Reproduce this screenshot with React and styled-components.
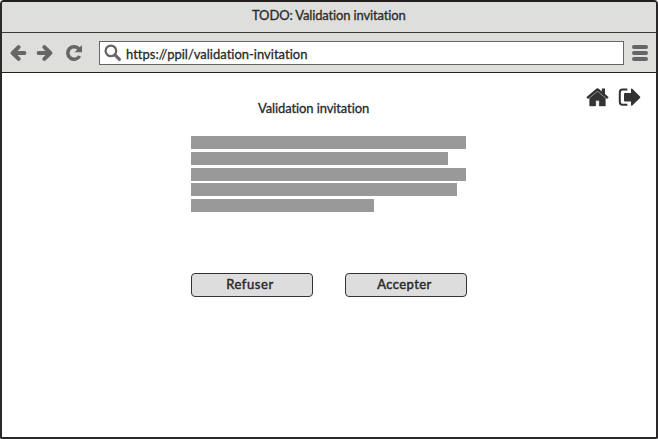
import React from "react";
import styled, { createGlobalStyle } from "styled-components";

const GlobalStyle = createGlobalStyle`
  *, *::before, *::after { box-sizing: border-box; }
  html, body { margin: 0; background: #fff; overflow: hidden; }
  svg { display: block; flex: none; }
`;

const Browser = styled.div`
  width: 658px;
  height: 439px;
  display: flex;
  flex-direction: column;
  border: 2px solid #2b2829;
  border-top-color: #231f20;
  border-radius: 4px 4px 2px 2px;
  background: #fff;
  overflow: hidden;
  color: #2a2a2a;
  font: 400 13px/18px Lato, "Open Sans", sans-serif;
`;

const Label = styled.span`
  display: block;
  white-space: nowrap;
  font-variant-ligatures: none;
  letter-spacing: ${(p) => p.$spacing || 0}px;
  -webkit-text-stroke: ${(p) => p.$stroke || 0.3}px currentColor;
`;

const TitleBar = styled.header`
  height: 31px;
  padding: 4px 0 0 250px;
  background: #dededd;
  border-bottom: 1px solid #3a3738;
`;

const Toolbar = styled.nav`
  height: 40px;
  display: flex;
  align-items: center;
  padding: 0 7px 0 8px;
  background: #dededd;
  border-bottom: 1px solid #231f20;
  color: #666;
`;

const NavButtons = styled.div`
  width: 89px;
  display: flex;
  gap: 8.5px;
`;

const NavButton = styled.button`
  all: unset;
  display: flex;
  margin-left: ${(p) => p.$gap || 0}px;
`;

const AddressBar = styled.div`
  width: 525px;
  height: 24px;
  display: flex;
  align-items: center;
  gap: 4px;
  padding: 1px 0 0 4px;
  margin-right: 8px;
  background: #fff;
  border: 1px solid #666;
  color: #666;
`;

const Url = styled(Label)`
  color: #2a2a2a;
  padding-top: 2px;
`;

const Page = styled.main`
  flex: 1;
  display: flex;
  flex-direction: column;
`;

const Actions = styled.div`
  display: flex;
  justify-content: flex-end;
  gap: 9px;
  height: 35px;
  padding: 15px 15.5px 0 0;
  color: #333;
`;

const Content = styled.section`
  width: 276px;
  margin: 0 auto;
`;

const Heading = styled.h1`
  margin: 0;
  height: 29px;
  padding: 0 0 0 67px;
  margin-top: -9px;
  font: inherit;
`;

const Paragraph = styled.div`
  display: flex;
  flex-direction: column;
  gap: 2.8px;
  padding-top: 8px;
  height: 145px;
`;

const TextLine = styled.div`
  flex: none;
  width: ${(p) => p.$width}px;
  height: 13px;
  background: #999;
`;

const ButtonRow = styled.div`
  display: flex;
  justify-content: space-between;
`;

const Button = styled.button`
  width: 122px;
  height: 24px;
  display: flex;
  align-items: flex-start;
  justify-content: center;
  padding: 1px ${(p) => p.$inset || 0}px 0 0;
  border: 1px solid #333;
  border-radius: 4px;
  background: #ddd;
  color: #2a2a2a;
  font: inherit;
`;

const ArrowIcon = ({ flip }) => (
  <svg width="17" height="18" viewBox="0 0 17 18" fill="none" stroke="currentColor" strokeWidth="4" strokeLinecap="round">
    <path
      d="M3 9H14.4M8.6 3.1L2.7 9L8.6 14.9"
      strokeLinejoin="round"
      transform={flip ? "translate(17 0) scale(-1 1)" : undefined}
    />
  </svg>
);

const ReloadIcon = () => (
  <svg width="18" height="18" viewBox="0 0 18 18">
    <path d="M14 5A6.3 6.3 0 1 0 14.6 12" fill="none" stroke="currentColor" strokeWidth="3.5" />
    <path d="M17 1V8.3H9.6Z" fill="currentColor" />
  </svg>
);

const SearchIcon = () => (
  <svg width="18" height="18" viewBox="0 0 18 18" fill="none" stroke="currentColor">
    <circle cx="6.9" cy="6.9" r="5.3" strokeWidth="2.3" />
    <path d="M11.2 11.2L15.4 15.3" strokeWidth="3.2" strokeLinecap="round" />
  </svg>
);

const MenuIcon = () => (
  <svg width="16" height="16" viewBox="0 0 16 16" stroke="currentColor" strokeWidth="4" strokeLinecap="round">
    <path d="M2 2H14M2 8H14M2 14H14" />
  </svg>
);

const HomeIcon = () => (
  <svg width="23" height="19" viewBox="0 0 23 19" fill="currentColor">
    <path d="M10.2 .8Q11.5 -.3 12.8 .8L15.8 3.4V.6H19V6L22.7 9.3L21 11L11.5 3.1L2 11L.3 9.3Z" />
    <path d="M11.5 3.6L19.4 10.2V18H13.2V12.6H9.8V18H3.6V10.2Z" stroke="currentColor" strokeWidth=".4" />
  </svg>
);

const SignOutIcon = () => (
  <svg width="23" height="19" viewBox="0 0 23 19">
    <path d="M9.4 1.5H4.5Q1.8 1.5 1.8 4.2V14.1Q1.8 16.8 4.5 16.8H9.4" fill="none" stroke="currentColor" strokeWidth="2" />
    <path d="M7 5H13V1.2Q13 -.1 14.3 .8L22 8.5Q22.6 9.2 22 9.9L14.3 17.5Q13 18.4 13 17.1V13.4H7Q6 13.4 6 12.4V6Q6 5 7 5Z" fill="currentColor" />
  </svg>
);

const lineWidths = [275, 257, 275, 266, 183];

export default function App() {
  return (
    <>
      <GlobalStyle />
      <Browser>
        <TitleBar>
          <Label $spacing={-0.14}>TODO: Validation invitation</Label>
        </TitleBar>
        <Toolbar>
          <NavButtons>
            <NavButton aria-label="Back"><ArrowIcon /></NavButton>
            <NavButton aria-label="Forward"><ArrowIcon flip /></NavButton>
            <NavButton aria-label="Reload" $gap={3.5}><ReloadIcon /></NavButton>
          </NavButtons>
          <AddressBar>
            <SearchIcon />
            <Url>https://ppil/validation-invitation</Url>
          </AddressBar>
          <MenuIcon />
        </Toolbar>
        <Page>
          <Actions>
            <HomeIcon />
            <SignOutIcon />
          </Actions>
          <Content>
            <Heading><Label $spacing={-0.11}>Validation invitation</Label></Heading>
            <Paragraph>
              {lineWidths.map((width, i) => <TextLine key={i} $width={width} />)}
            </Paragraph>
            <ButtonRow>
              <Button $inset={4}><Label $spacing={0.6} $stroke={0.45}>Refuser</Label></Button>
              <Button $inset={3}><Label $spacing={0.4} $stroke={0.45}>Accepter</Label></Button>
            </ButtonRow>
          </Content>
        </Page>
      </Browser>
    </>
  );
}
